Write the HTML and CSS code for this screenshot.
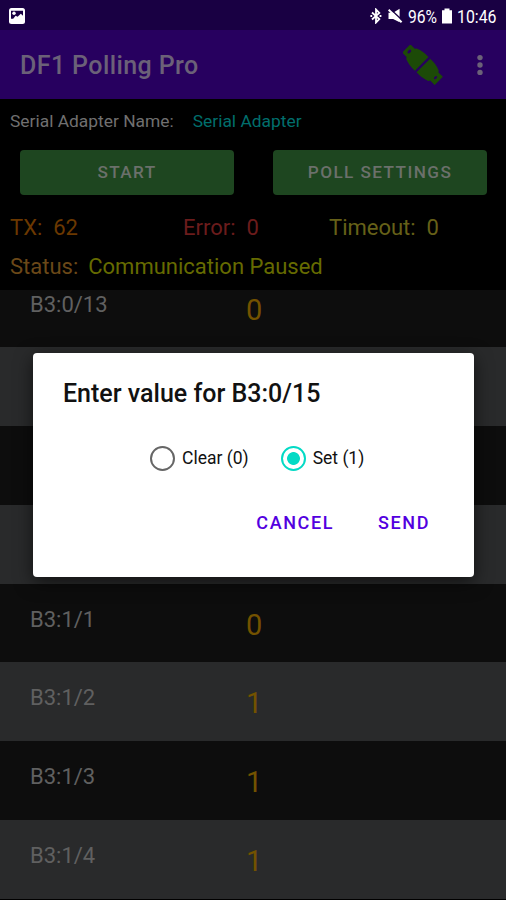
FILE: index.html
```html
<!DOCTYPE html>
<html lang="en">
<head>
    <meta charset="UTF-8">
    <meta name="viewport" content="width=device-width, initial-scale=1.0">
    <title>DF1 Polling Pro</title>
    <link rel="stylesheet" href="styles.css">
</head>
<body>

    <div class="status-bar">
        <svg class="picture-icon" width="16" height="16" viewBox="0 0 16 16">
            <rect x="0" y="0" width="16" height="16" rx="2.5" fill="#fff"/>
            <path d="M2 2.8h12v5l-2.2-2-3.2 3-2-1-2.4 3H2z" fill="#190043"/>
            <circle cx="5" cy="5.3" r="1.7" fill="#fff"/>
        </svg>
        <div class="status-right">
            <svg width="12" height="16" viewBox="0 0 12 16">
                <path d="M2 4.5l7.3 6.6L6 14.5v-13l3.3 3.4L2 11.5" fill="none" stroke="#fff" stroke-width="1.8"/>
                <path d="M.4 8h1.8M9.6 8h1.8" stroke="#fff" stroke-width="1.8"/>
            </svg>
            <svg class="mute-icon" width="15" height="16" viewBox="0 0 15 16">
                <path d="M.5 4.8h4.6L11.6.8v13.4L5.1 11H.5z" fill="#fff"/>
                <path d="M2 .8l13.5 12.7" stroke="#190043" stroke-width="1.4"/>
                <path d="M.6 1.8l13 12.4" stroke="#fff" stroke-width="2"/>
            </svg>
            <span class="battery-text">96%</span>
            <svg class="battery-icon" width="10" height="16" viewBox="0 0 10 16">
                <path d="M0 2.2h2.5V.5h5v1.7H10v13.3H0z" fill="#fff"/>
            </svg>
            <span class="clock">10:46</span>
        </div>
    </div>

    <div class="app-bar">
        <h1>DF1 Polling Pro</h1>
        <svg class="plug-icon" width="40" height="40" viewBox="0 0 40 40">
            <g transform="translate(19.5 19.7) rotate(45)">
                <path d="M-1.2-9.6V9.6Q-9 10.2-15.5 7.4l-1.2-1.6H-23V-5.8h6.3l1.2-1.6Q-9-10.2-1.2-9.6z" fill="#1c4a07"/>
                <path d="M1.2-9.6V9.6Q9 10.2 15.5 7.4l1.2-1.6H23V-5.8h-6.3l-1.2-1.6Q9-10.2 1.2-9.6z" fill="#1c4a07"/>
                <ellipse cx="-18.6" cy="0" rx="1.4" ry="2.3" fill="#27005f"/>
                <ellipse cx="18.4" cy="0" rx="1.2" ry="1.9" fill="#27005f"/>
            </g>
        </svg>
        <svg class="menu-icon" width="6" height="22" viewBox="0 0 6 22">
            <circle cx="3" cy="3.6" r="2.7" fill="#6b6178"/>
            <circle cx="3" cy="11" r="2.7" fill="#6b6178"/>
            <circle cx="3" cy="18.4" r="2.7" fill="#6b6178"/>
        </svg>
    </div>

    <div class="panel">
        <div class="adapter">
            <span>Serial Adapter Name:</span>
            <span class="adapter-name">Serial Adapter</span>
        </div>
        <div class="buttons">
            <button class="btn">START</button>
            <button class="btn">POLL SETTINGS</button>
        </div>
        <div class="counters">
            <span class="tx">TX:&nbsp; 62</span>
            <span class="error">Error:&nbsp; 0</span>
            <span class="timeout">Timeout:&nbsp; 0</span>
        </div>
        <div class="status">
            <span class="status-label">Status:</span>
            <span class="status-value">Communication Paused</span>
        </div>
    </div>

    <div class="list">
        <div class="row first"><span class="address">B3:0/13</span><span class="value">0</span></div>
        <div class="row"></div>
        <div class="row"></div>
        <div class="row"></div>
        <div class="row"><span class="address">B3:1/1</span><span class="value">0</span></div>
        <div class="row"><span class="address">B3:1/2</span><span class="value">1</span></div>
        <div class="row"><span class="address">B3:1/3</span><span class="value">1</span></div>
        <div class="row"><span class="address">B3:1/4</span><span class="value">1</span></div>
    </div>

    <div class="dialog">
        <h2>Enter value for B3:0/15</h2>
        <div class="options">
            <label class="option"><span class="radio"></span>Clear (0)</label>
            <label class="option"><span class="radio checked"></span>Set (1)</label>
        </div>
        <div class="actions">
            <button class="action">CANCEL</button>
            <button class="action">SEND</button>
        </div>
    </div>

</body>
</html>
```
FILE: styles.css
```css
* {
    box-sizing: border-box;
}

body {
    font-family: Roboto, sans-serif;
    margin: 0;
    height: 900px;
    display: flex;
    flex-direction: column;
    background-color: #000;
    overflow: hidden;
    position: relative;
    white-space: nowrap;
}

h1, h2 {
    margin: 0;
    font-weight: 500;
}

button {
    font-family: inherit;
    border: none;
    padding: 0;
}

.status-bar {
    height: 30px;
    flex: none;
    display: flex;
    align-items: center;
    justify-content: space-between;
    padding: 2px 9px 0;
    background-color: #190043;
    color: #fff;
    font-size: 18px;
}

.status-right {
    display: flex;
    align-items: center;
}

.mute-icon {
    margin-left: 6px;
}

.battery-text {
    width: 30px;
    margin-left: 5px;
    transform: scaleX(0.87);
    transform-origin: left;
}

.battery-icon {
    margin-left: 4px;
}

.clock {
    width: 40px;
    margin-left: 5px;
    transform: scaleX(0.88);
    transform-origin: left;
}

.app-bar {
    height: 69px;
    flex: none;
    display: flex;
    align-items: center;
    padding: 0 23px 0 20px;
    background-color: #27005f;
}

h1 {
    flex: 1;
    padding-top: 2px;
    font-size: 25px;
    letter-spacing: 0.4px;
    color: #6b6178;
}

.plug-icon {
    margin-right: 34px;
}

.panel {
    height: 191px;
    flex: none;
    padding-top: 13px;
}

.adapter {
    height: 20px;
    line-height: 19px;
    padding-left: 10px;
    display: flex;
    gap: 19px;
    font-size: 17.4px;
    color: #707070;
}

.adapter-name {
    color: #016e6c;
}

.buttons {
    display: flex;
    gap: 39px;
    padding: 18px 19px 0 20px;
}

.btn {
    flex: 1;
    height: 45px;
    padding-bottom: 1px;
    border-radius: 4px;
    background-color: #1e4620;
    color: #6b706b;
    font-size: 17.2px;
    font-weight: 500;
    letter-spacing: 1.4px;
}

.counters {
    display: grid;
    grid-template-columns: 173px 146px 1fr;
    padding: 19px 0 0 10px;
    font-size: 22px;
    line-height: 28px;
}

.tx {
    color: #6b3800;
}

.error {
    color: #6b1c1c;
}

.timeout {
    color: #666018;
}

.status {
    display: flex;
    gap: 10px;
    padding: 11px 0 0 10px;
    font-size: 22px;
    line-height: 28px;
}

.status-label {
    color: #6b4818;
}

.status-value {
    color: #666b00;
}

.list {
    flex: none;
}

.row {
    height: 78.75px;
    display: flex;
    padding: 21px 0 0 30px;
    background-color: #292a2b;
}

.row:nth-child(odd) {
    background-color: #0d0d0d;
}

.row.first {
    height: 57.4px;
    padding-top: 0;
}

.address {
    width: 216px;
    font-size: 22px;
    line-height: 29px;
    color: #606060;
}

.value {
    font-size: 29px;
    line-height: 40px;
    color: #735200;
}

.dialog {
    position: absolute;
    left: 33px;
    top: 353px;
    width: 441px;
    height: 224px;
    padding: 26px 44px 0 30px;
    border-radius: 4px;
    background-color: #fff;
    color: #111;
    box-shadow: 0 5px 18px rgba(0, 0, 0, 0.6);
}

h2 {
    font-size: 25px;
    line-height: 30px;
}

.options {
    display: flex;
    gap: 32px;
    padding: 36px 0 0 87px;
}

.option {
    display: flex;
    align-items: center;
    gap: 7px;
    font-size: 17.5px;
    line-height: 26px;
}

.radio {
    width: 25px;
    height: 25px;
    border: 2px solid #666;
    border-radius: 50%;
}

.radio.checked {
    border-color: #03dac5;
    background: radial-gradient(circle, #03dac5 6px, #fff 6.8px);
}

.actions {
    display: flex;
    justify-content: flex-end;
    gap: 44px;
    padding-top: 41px;
}

.action {
    background: none;
    color: #5300e0;
    font-size: 18px;
    font-weight: 500;
    line-height: 22px;
    letter-spacing: 1.6px;
}
```
